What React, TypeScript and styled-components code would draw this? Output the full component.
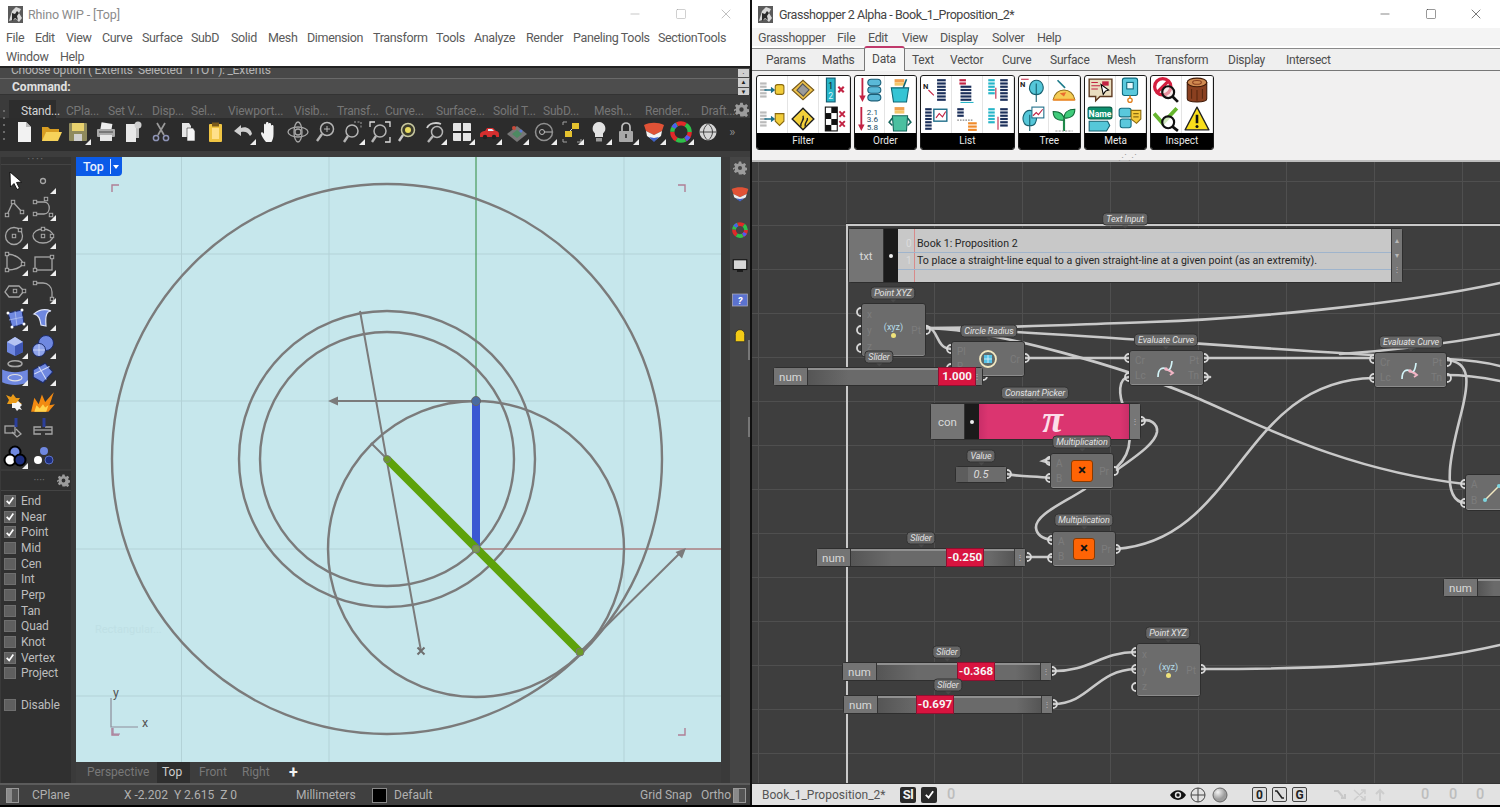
import React from "react";
import styled, { createGlobalStyle } from "styled-components";
import { Minus, Square, X } from "lucide-react";

const Global = createGlobalStyle`
  html, body { margin: 0; padding: 0; background: #000; }
  body { font-family: Roboto, "Open Sans", Arial, sans-serif; }
  * { box-sizing: border-box; }
`;

const OX = 752;
const OY = 162;

const Screen = styled.div`
  display: flex;
  width: 1500px;
  height: 807px;
  overflow: hidden;
  background: #000;
`;

/* ---------- shared window chrome ---------- */
const TitleBar = styled.div<{ $pad: number }>`
  display: flex;
  align-items: center;
  height: 28px;
  background: #fff;
  padding-left: ${(p) => p.$pad}px;
  flex: none;
`;
const TitleText = styled.span<{ $dim?: boolean }>`
  margin-left: ${(p) => (p.$dim ? 5 : 6)}px;
  font-size: 12.5px;
  letter-spacing: ${(p) => (p.$dim ? -0.15 : -0.45)}px;
  color: ${(p) => (p.$dim ? "#8b8b8b" : "#444")};
`;
const WinButtons = styled.div<{ $dim?: boolean }>`
  display: flex;
  margin-left: auto;
  margin-right: 1px;
  color: ${(p) => (p.$dim ? "#a0a0a0" : "#333")};
`;
const WinButton = styled.div`
  width: 45.5px;
  height: 28px;
  display: flex;
  align-items: center;
  justify-content: center;
`;
const MenuBar = styled.div<{ $bg?: string; $h: number }>`
  display: flex;
  flex-wrap: wrap;
  align-content: flex-start;
  flex: none;
  height: ${(p) => p.$h}px;
  padding-left: 6px;
  background: ${(p) => p.$bg || "#fff"};
`;
const MenuItem = styled.span<{ $w: number; $c: string }>`
  width: ${(p) => p.$w}px;
  height: 19px;
  line-height: 19px;
  font-size: 12.5px;
  letter-spacing: -0.35px;
  white-space: nowrap;
  color: ${(p) => p.$c};
`;

function Logo() {
  return (
    <svg width="15" height="17" viewBox="0 0 15 17">
      <rect width="15" height="17" fill="#5a5a5a" />
      <path d="M1 15 4 5l4-4 5 2-2 4 3 5-3 4-3-3-4 1z" fill="#d8d8d8" />
      <path d="M4 7l3 1 2-3 2 2-2 3 1 4-3-2-3 3z" fill="#2b2b2b" />
    </svg>
  );
}

function Buttons({ dim }: { dim?: boolean }) {
  return (
    <WinButtons $dim={dim}>
      <WinButton><Minus size={14} strokeWidth={1} /></WinButton>
      <WinButton><Square size={12} strokeWidth={1} /></WinButton>
      <WinButton><X size={16} strokeWidth={1} /></WinButton>
    </WinButtons>
  );
}

/* ---------- Rhino window ---------- */
const RhinoWindow = styled.div`
  width: 750px;
  height: 805px;
  display: flex;
  flex-direction: column;
  background: #3b3b3b;
  flex: none;
`;
const History = styled.div`
  height: 12px;
  flex: none;
  overflow: hidden;
  background: #484848;
  border-top: 2px solid #222;
  padding-left: 11px;
  font-size: 12px;
  line-height: 5px;
  white-space: pre;
  letter-spacing: -0.25px;
  color: #b5b5b5;
`;
const CommandRow = styled.div`
  height: 17px;
  flex: none;
  display: flex;
  align-items: center;
  background: #4d4d4d;
  border-top: 1px solid #6a6a6a;
  border-bottom: 1px solid #333;
  padding-left: 12px;
  font-size: 12px;
  font-weight: 700;
  color: #e0e0e0;
  position: relative;
`;
const ScrollKeys = styled.div`
  position: absolute;
  right: 1px;
  top: -10px;
  width: 11px;
  height: 27px;
  display: flex;
  flex-direction: column;
  gap: 1px;
`;
const ScrollKey = styled.span`
  flex: 1;
  background: #cfcfcf;
  color: #222;
  font-size: 6px;
  line-height: 8px;
  text-align: center;
`;
const TabStrip = styled.div`
  height: 23px;
  flex: none;
  display: flex;
  align-items: flex-end;
  padding-left: 9px;
  background: #3b3b3b;
  position: relative;
`;
const TbTab = styled.span<{ $w: number; $on?: boolean }>`
  width: ${(p) => p.$w}px;
  flex: none;
  height: 18px;
  line-height: 22px;
  font-size: 12px;
  letter-spacing: -0.2px;
  white-space: nowrap;
  color: ${(p) => (p.$on ? "#d4d4d4" : "#767676")};
  background: ${(p) => (p.$on ? "#2d2d2d" : "transparent")};
  padding-left: ${(p) => (p.$on ? 12 : 0)}px;
`;
const GearSpot = styled.span`
  position: absolute;
  right: 1px;
  top: 7px;
  display: flex;
`;
const IconRow = styled.div`
  height: 33px;
  flex: none;
  display: flex;
  align-items: flex-start;
  padding: 1px 0 0 10px;
  background: #2c2c2c;
  position: relative;
  &::before {
    content: "";
    position: absolute;
    left: 3px;
    top: -8px;
    width: 2px;
    height: 30px;
    background: repeating-linear-gradient(#6a6a6a 0 2px, transparent 2px 7px);
  }
`;
const ToolSlot = styled.div<{ $fly?: boolean; $w: number }>`
  width: ${(p) => p.$w}px;
  height: 26px;
  flex: none;
  display: flex;
  align-items: center;
  justify-content: center;
  position: relative;
  &::after {
    content: "";
    display: ${(p) => (p.$fly ? "block" : "none")};
    position: absolute;
    right: 1px;
    bottom: 0;
    border-left: 6px solid transparent;
    border-bottom: 6px solid #eee;
  }
`;
const MoreGlyph = styled.span`
  color: #8a8a8a;
  font-size: 13px;
  margin-left: 7px;
  line-height: 26px;
`;
const ToolbarGap = styled.div`
  height: 6px;
  flex: none;
  background: #3d3d3d;
`;
const RhinoBody = styled.div`
  flex: 1;
  display: flex;
  min-height: 0;
`;
const LeftDock = styled.div`
  width: 76px;
  flex: none;
  display: flex;
  flex-direction: column;
  background: #3a3a3a;
  padding: 0 5px 0 1px;
`;
const ToolPanel = styled.div`
  height: 312px;
  flex: none;
  background: #333;
  padding: 0;
`;
const Grip = styled.div`
  display: flex;
  justify-content: center;
  height: 8px;
  border-bottom: 1px solid #444;
  margin-bottom: 2px;
  &::before {
    content: "····";
    letter-spacing: 1.5px;
    color: #777;
    font-size: 11px;
    line-height: 5px;
  }
`;
const ToolGrid = styled.div`
  display: grid;
  grid-template-columns: 28px 28px;
  grid-auto-rows: 27.5px;
  justify-items: center;
  align-items: center;
`;
const SnapPanel = styled.div`
  flex: 1;
  background: #303030;
  margin-top: 2px;
`;
const SnapHead = styled.div`
  height: 20px;
  display: flex;
  align-items: center;
  justify-content: flex-end;
  padding-right: 1px;
  border-bottom: 1px solid #444;
  color: #777;
  font-size: 11px;
  gap: 12px;
  margin-bottom: 2px;
`;
const SnapRow = styled.div<{ $gap?: boolean }>`
  display: flex;
  align-items: center;
  height: 15.7px;
  padding-left: 3px;
  margin-top: ${(p) => (p.$gap ? 16 : 0)}px;
  font-size: 12px;
  letter-spacing: -0.1px;
  color: #bdbdbd;
`;
const Check = styled.span`
  width: 12px;
  height: 12px;
  margin-right: 5px;
  background: #5f5f5f;
  border: 1px solid #6f6f6f;
  display: flex;
  align-items: center;
  justify-content: center;
`;
const Center = styled.div`
  width: 645px;
  flex: none;
  display: flex;
  flex-direction: column;
`;
const Viewport = styled.div`
  height: 605px;
  flex: none;
  position: relative;
  background: #c6e7ec;
`;
const ViewSvg = styled.svg`
  display: block;
  width: 645px;
  height: 605px;
`;
const ViewTag = styled.div`
  position: absolute;
  left: 0;
  top: 0;
  width: 46px;
  height: 19px;
  display: flex;
  align-items: center;
  background: #0b5be8;
  color: #e6f0ff;
  font-size: 12.5px;
  font-weight: 500;
  border-bottom-right-radius: 4px;
  padding-left: 7px;
`;
const TagArrow = styled.span`
  margin-left: 6px;
  border-left: 1px solid #dfe9ff;
  height: 15px;
  padding-left: 2px;
  display: flex;
  align-items: center;
  &::after {
    content: "";
    border-left: 3px solid transparent;
    border-right: 3px solid transparent;
    border-top: 4px solid #fff;
  }
`;
const GhostLabel = styled.div`
  position: absolute;
  left: 19px;
  top: 466px;
  font-size: 11px;
  color: #bfe0e5;
`;
const ViewTabs = styled.div`
  flex: 1;
  display: flex;
  align-items: center;
  padding-left: 11px;
  background: #3d3d3d;
`;
const ViewTab = styled.span<{ $w: number; $on?: boolean; $plus?: boolean }>`
  width: ${(p) => p.$w}px;
  height: 21px;
  line-height: 21px;
  flex: none;
  padding-left: ${(p) => (p.$on ? 5 : 0)}px;
  color: ${(p) => (p.$plus ? "#f2f2f2" : p.$on ? "#cfcfcf" : "#787878")};
  font-weight: ${(p) => (p.$plus ? 700 : 400)};
  font-size: ${(p) => (p.$plus ? 16 : 12)}px;
  background: ${(p) => (p.$on ? "#2e2e2e" : "transparent")};
`;
const RightDock = styled.div`
  flex: 1;
  display: flex;
  flex-direction: column;
  align-items: flex-end;
  background: #3a3a3a;
  position: relative;
  &::before, &::after {
    content: "";
    position: absolute;
    right: 0;
    width: 2px;
    height: 20px;
    background: #777;
  }
  &::before { top: 183px; }
  &::after { top: 260px; }
`;
const DockBand = styled.div`
  width: 20px;
  display: flex;
  flex-direction: column;
  align-items: center;
  height: 100%;
  background: #454545;
`;
const DockSlot = styled.div<{ $h: number }>`
  height: ${(p) => p.$h}px;
  flex: none;
  display: flex;
  align-items: center;
  justify-content: center;
`;
const RhinoStatus = styled.div`
  height: 22px;
  flex: none;
  display: flex;
  align-items: center;
  position: relative;
  background: #404040;
  border-top: 2px solid #5c5c5c;
  font-size: 12px;
  color: #b0b0b0;
`;
const StatusCell = styled.span<{ $w: number; $inset?: number }>`
  width: ${(p) => p.$w}px;
  padding-left: ${(p) => p.$inset || 0}px;
  flex: none;
  white-space: nowrap;
  overflow: hidden;
  display: flex;
  align-items: center;
`;
const Swatch = styled.span`
  width: 15px;
  height: 15px;
  flex: none;
  background: #000;
  border: 1px solid #888;
  margin-right: 7px;
`;
const PaneMark = styled.span<{ $ml: number }>`
  width: 13px;
  height: 15px;
  flex: none;
  margin-left: ${(p) => p.$ml}px;
  background: linear-gradient(90deg, #8a8a8a 0 45%, #555 45%);
  border: 1px solid #999;
`;

/* ---------- Grasshopper window ---------- */
const GhWindow = styled.div`
  flex: 1;
  height: 805px;
  display: flex;
  flex-direction: column;
  border-left: 2px solid #111;
  background: #fff;
`;
const GhTabs = styled.div`
  height: 25px;
  flex: none;
  display: flex;
  align-items: flex-end;
  padding-left: 4px;
  background: #efefef;
  border-bottom: 1px solid #777;
  box-shadow: inset 0 2px 0 #fff, inset 0 3px 0 #8a8a8a;
`;
const GhTab = styled.span<{ $w: number; $on?: boolean }>`
  width: ${(p) => p.$w}px;
  flex: none;
  height: 25px;
  line-height: ${(p) => (p.$on ? 23 : 30)}px;
  font-size: 12px;
  letter-spacing: -0.25px;
  padding-left: ${(p) => (p.$on ? 7 : 10)}px;
  white-space: nowrap;
  color: #4d4d4d;
  margin-bottom: ${(p) => (p.$on ? -1 : 0)}px;
  margin-right: ${(p) => (p.$on ? -3 : 0)}px;
  position: relative;
  z-index: ${(p) => (p.$on ? 1 : 0)};
  background: ${(p) => (p.$on ? "#f6f6f6" : "transparent")};
  border: ${(p) => (p.$on ? "1px solid #777" : "none")};
  border-top: ${(p) => (p.$on ? "2px solid #c0396b" : "none")};
  border-bottom: none;
  border-radius: 3px 3px 0 0;
`;
const Ribbon = styled.div`
  height: 91px;
  flex: none;
  display: flex;
  gap: 3px;
  padding: 4px 0 0 4px;
  background: #f1f0f0;
  border-bottom: 2px solid #bdbdbd;
  position: relative;
`;
const RibbonGroup = styled.div<{ $cols: number }>`
  width: ${(p) => p.$cols * 31.4 + 0.5}px;
  height: 75px;
  display: flex;
  flex-direction: column;
  border: 1px solid #1a1a1a;
  border-radius: 3px;
  overflow: hidden;
  background: #fff;
`;
const RibbonCells = styled.div<{ $cols: number }>`
  flex: 1;
  display: grid;
  grid-template-columns: repeat(${(p) => p.$cols}, 1fr);
  grid-template-rows: 1fr 1fr;
`;
const RibbonCell = styled.div`
  display: flex;
  align-items: center;
  justify-content: center;
  border-right: 1px solid #e4e4e4;
  svg { display: block; }
`;
const RibbonLabel = styled.div`
  height: 16px;
  flex: none;
  background: #000;
  color: #e8e8e8;
  font-size: 10px;
  line-height: 15px;
  text-align: center;
`;
const RibbonGrip = styled.div`
  position: absolute;
  left: 366px;
  bottom: -1px;
  font-size: 9px;
  line-height: 6px;
  letter-spacing: 0.5px;
  color: #999;
`;
const Canvas = styled.div`
  flex: 1;
  position: relative;
  overflow: hidden;
  background-color: #3e3e3e;
  background-image:
    linear-gradient(90deg, #4f4f4f 1px, transparent 1px),
    linear-gradient(#4f4f4f 1px, transparent 1px);
  background-size: 88px 44px;
  background-position: 6px 19px;
`;
const GroupEdge = styled.div`
  position: absolute;
  left: ${846 - OX}px;
  top: ${224 - OY}px;
  width: 1000px;
  height: 800px;
  border-left: 2px solid #c9c9c9;
  border-top: 2px solid #c9c9c9;
  box-shadow: 0 -1px 0 #2f2f2f;
`;
const WireSvg = styled.svg`
  position: absolute;
  left: 0;
  top: 0;
  width: 748px;
  height: 621px;
`;
const Node = styled.div<{ $x: number; $y: number; $w: number; $h: number }>`
  position: absolute;
  left: ${(p) => p.$x - OX}px;
  top: ${(p) => p.$y - OY}px;
  width: ${(p) => p.$w}px;
  height: ${(p) => p.$h}px;
  background: #6c6c6c;
  border: 1px solid #2e2e2e;
  border-radius: 3px;
  display: flex;
  box-shadow: inset 0 -1px 0 #8c8c8c;
`;
const PortColumn = styled.div`
  flex: none;
  width: 17px;
  display: flex;
  flex-direction: column;
  justify-content: space-around;
  padding: 2px 0 2px 5px;
  font-size: 10px;
  color: #7c7c7c;
`;
const PortColumnRight = styled(PortColumn)`
  padding: 2px 4px 2px 0;
  text-align: right;
`;
const NodeFace = styled.div<{ $fixed?: number }>`
  flex: ${(p) => (p.$fixed ? "none" : 1)};
  width: ${(p) => (p.$fixed ? `${p.$fixed}px` : "auto")};
  display: flex;
  flex-direction: column;
  align-items: center;
  justify-content: center;
  color: #b5dde9;
  font-size: 9px;
  line-height: 10px;
`;
const YellowDot = styled.span`
  width: 5px;
  height: 5px;
  border-radius: 50%;
  background: #efe27a;
  margin-top: 1px;
`;
const MulBox = styled.div`
  width: 22px;
  height: 22px;
  border: 1px solid #8a3a00;
  border-radius: 3px;
  background: #ff6405;
  color: #111;
  font-size: 15px;
  font-weight: 700;
  line-height: 19px;
  text-align: center;
`;
const Tag = styled.div<{ $x: number; $y: number }>`
  position: absolute;
  left: ${(p) => p.$x - OX}px;
  top: ${(p) => p.$y - OY}px;
  transform: translate(-50%, -50%);
  height: 13px;
  padding: 0 3px;
  background: #666;
  border: 1px solid #333;
  border-radius: 4px;
  font-size: 9px;
  line-height: 11px;
  letter-spacing: -0.1px;
  font-style: italic;
  white-space: nowrap;
  color: #e2e2e2;
  z-index: 3;
  &::after {
    content: "";
    position: absolute;
    left: 50%;
    bottom: -4px;
    margin-left: -3px;
    border-left: 3px solid transparent;
    border-right: 3px solid transparent;
    border-top: 3px solid #4a4a4a;
  }
`;
const NameCell = styled.div<{ $w: number }>`
  width: ${(p) => p.$w}px;
  flex: none;
  display: flex;
  align-items: center;
  justify-content: center;
  font-size: 11.5px;
  color: #d8d8d8;
  background: #747474;
  border-right: 1px solid #333;
`;
const DotBand = styled.div`
  width: 14px;
  flex: none;
  background: #1b1b1b;
  display: flex;
  align-items: center;
  justify-content: center;
  &::after {
    content: "";
    width: 4px;
    height: 4px;
    border-radius: 50%;
    background: #eee;
  }
`;
const StripCell = styled.div`
  width: 11px;
  flex: none;
  background: #767676;
  border-left: 1px solid #3a3a3a;
  display: flex;
  flex-direction: column;
  align-items: center;
  justify-content: space-evenly;
  color: #b8b8b8;
  font-size: 8px;
  line-height: 6px;
`;
const SheetPanel = styled.div`
  flex: 1;
  position: relative;
  background: #c8c8c8;
  padding: 7px 0 0 19px;
  font-size: 10.6px;
  color: #262626;
  &::before {
    content: "";
    position: absolute;
    left: 16px;
    top: 0;
    bottom: 0;
    width: 1px;
    background: #d88a8a;
  }
`;
const SheetRow = styled.div`
  height: 17px;
  line-height: 16px;
  position: relative;
  margin-left: -19px;
  padding-left: 19px;
  border-bottom: 1px solid #9fb4cc;
`;
const RowNo = styled.span`
  position: absolute;
  left: 8px;
  color: #dcdcdc;
  font-size: 10px;
`;
const PiPanel = styled.div`
  flex: 1;
  background: linear-gradient(90deg, #c92e68, #db3570 6%, #db3570 94%, #c92e68);
  color: #fbdde9;
  font-family: "Liberation Serif", serif;
  font-style: italic;
  font-weight: 700;
  font-size: 38px;
  line-height: 30px;
  padding-right: 3px;
  text-align: center;
`;
const Track = styled.div`
  flex: 1;
  position: relative;
  background: linear-gradient(90deg, #555 0, #6a6a6a 25%, #6a6a6a 85%, #555 100%);
  box-shadow: inset 0 2px 0 #909090;
`;
const RedValue = styled.div<{ $left: number }>`
  position: absolute;
  left: ${(p) => p.$left}px;
  top: -1px;
  bottom: -1px;
  width: 38px;
  background: #d8143f;
  border: 1px solid #8e1030;
  color: #f6f6f6;
  font-size: 11.5px;
  font-weight: 700;
  text-align: center;
  line-height: 17px;
`;
const ValueFace = styled.div`
  flex: 1;
  text-align: center;
  font-style: italic;
  font-size: 11px;
  line-height: 15px;
  color: #dcdcdc;
  background: linear-gradient(90deg, #5d5d5d 0 12px, #6c6c6c 12px);
`;
const GhStatus = styled.div`
  height: 22px;
  flex: none;
  display: flex;
  align-items: center;
  padding-left: 10px;
  background: #e2e2e2;
  border-top: 1px solid #333;
  font-size: 12px;
  color: #555;
`;
const Spacer = styled.span<{ $w: number }>`
  width: ${(p) => p.$w}px;
  flex: none;
  display: flex;
  align-items: center;
  white-space: nowrap;
`;
const DarkChip = styled.span`
  width: 16px;
  height: 16px;
  flex: none;
  border-radius: 2px;
  background: #2a2a2a;
  color: #f2f2f2;
  display: flex;
  align-items: center;
  justify-content: center;
  font-size: 13px;
  font-weight: 700;
  letter-spacing: -0.5px;
`;
const PaleCount = styled.span<{ $w: number }>`
  width: ${(p) => p.$w}px;
  flex: none;
  font-size: 14.5px;
  color: #bdbdbd;
  font-weight: 500;
`;
const OutlineChip = styled.span`
  width: 15px;
  height: 15px;
  flex: none;
  border: 1px solid #444;
  border-radius: 2px;
  background: #dcdcdc;
  color: #222;
  font-size: 12px;
  font-weight: 700;
  display: flex;
  align-items: center;
  justify-content: center;
  margin-right: 5px;
`;

/* ---------- icons ---------- */
const T = (children: React.ReactNode, size = 24) => (
  <svg width={size} height={size} viewBox="0 0 24 24">{children}</svg>
);
const sq = (x: number, y: number) => <rect x={x - 1.7} y={y - 1.7} width="3.4" height="3.4" fill="#333" stroke="#a8a8a8" />;
const line = { fill: "none", stroke: "#a6a6a6", strokeWidth: 1.3 };

const topTools: [React.ReactNode, boolean][] = [
  [T(<><path d="M6 2h8l5 5v15H6z" fill="#f2f2f2" /><path d="M14 2v5h5" fill="#bbb" /></>), false],
  [T(<><path d="M3 7h6l2 2h9v4H7l-3 8H3z" fill="#d89d22" /><path d="M7 12h16l-4 9H3z" fill="#f6d25a" /></>), false],
  [T(<><rect x="3" y="3" width="18" height="18" rx="1" fill="#8f8a5d" /><rect x="6" y="3" width="12" height="8" fill="#e9d26e" /><rect x="8" y="14" width="8" height="7" fill="#d0d0d0" /></>), true],
  [T(<><rect x="7" y="3" width="11" height="7" fill="#eee" transform="rotate(10 12 6)" /><rect x="3" y="9" width="18" height="8" rx="1" fill="#a9a9a9" /><rect x="6" y="15" width="12" height="6" fill="#e6e6e6" /><path d="M5 12h14" stroke="#444" /></>), false],
  [T(<><path d="M5 4h10v18H5z" fill="#e8e8e8" /><path d="M15 6h3v12h-3z" fill="#bdbdbd" /><circle cx="17" cy="5" r="3.5" fill="#cfcfcf" /></>), false],
  [T(<><path d="M8 3l7 12M16 3L9 15" stroke="#9a9a9a" strokeWidth="1.7" /><circle cx="7" cy="18" r="2.6" fill="none" stroke="#8f95b8" strokeWidth="1.5" /><circle cx="17" cy="18" r="2.6" fill="none" stroke="#8f95b8" strokeWidth="1.5" /></>), false],
  [T(<><path d="M6 3h7l2 3v11H6z" fill="#e6e6e6" /><path d="M11 8h6l2 3v10h-8z" fill="#f5f5f5" stroke="#333" strokeWidth=".6" /></>), false],
  [T(<><rect x="6" y="4" width="13" height="18" rx="1" fill="#f0c543" /><rect x="9" y="2.5" width="7" height="4" fill="#7a5a1c" /><rect x="9" y="8" width="7" height="11" fill="#ffe08a" /></>), false],
  [T(<path d="M3 14c1-6 7-8 11-6V5l7 6-7 5v-4c-4-1-7 0-9 4z" transform="matrix(-1 0 0 1 24 0)" fill="#cfcfcf" />), true],
  [T(<path d="M8 22c-2-2-5-7-5-9 0-1 2-1 3 1V5c0-1.700 2-1.700 2 0V3c0-1.500 2.500-1.500 2.500 0v1c0-1.500 2.500-1.500 2.500 0v2c0-1.500 2.500-1.500 2.500 0v8c0 4-1 6-2 8z" fill="#f2f2f2" />), false],
  [T(<><circle cx="12" cy="12" r="3" fill="none" {...line} /><ellipse cx="12" cy="12" rx="10" ry="5" {...line} /><ellipse cx="12" cy="12" rx="4" ry="10" {...line} /></>), false],
  [T(<><circle cx="14" cy="9" r="6.5" fill="#2c2c2c" stroke="#b5b5b5" strokeWidth="1.5" /><path d="M9 14l-5 7" stroke="#b5b5b5" strokeWidth="2.400" /><path d="M14 6v6M11 9h6" stroke="#b5b5b5" /></>), false],
  [T(<><circle cx="12" cy="11" r="6" fill="none" stroke="#b5b5b5" strokeWidth="1.500" /><path d="M8 16l-4 6" stroke="#b5b5b5" strokeWidth="2.400" /><path d="M14 2h7v7" fill="none" stroke="#a0a0a0" strokeDasharray="2 1.500" /></>), true],
  [T(<><circle cx="12" cy="11" r="6" fill="none" stroke="#b5b5b5" strokeWidth="1.500" /><path d="M8 16l-4 6" stroke="#b5b5b5" strokeWidth="2.400" /><path d="M2 7V2h5M17 2h5v5M22 17v5h-5" fill="none" stroke="#ddd" strokeWidth="1.300" /></>), false],
  [T(<><circle cx="13" cy="10" r="6.500" fill="#3c3c2c" stroke="#c8c8a0" strokeWidth="1.500" /><circle cx="13" cy="10" r="3" fill="#e9dc5f" /><path d="M8 15l-4 6" stroke="#c8c8c8" strokeWidth="2.400" /></>), false],
  [T(<><circle cx="14" cy="12" r="5.500" fill="none" stroke="#b5b5b5" strokeWidth="1.500" /><path d="M10 16l-5 6" stroke="#b5b5b5" strokeWidth="2.400" /><path d="M4 8c2-5 9-6 14-4" fill="none" stroke="#ccc" strokeWidth="1.800" /></>), true],
  [T(<><rect x="3" y="3" width="18" height="18" rx="1" fill="#e4e4e4" /><path d="M12 3v18M3 12h18" stroke="#222" strokeWidth="1.800" /></>), true],
  [T(<><path d="M3 15c0-3 3-4 5-4l2-3h6l3 3c2 0 3 1 3 4v2H3z" fill="#d62f2f" /><circle cx="8" cy="17" r="2.200" fill="#222" /><circle cx="17" cy="17" r="2.200" fill="#222" /><path d="M11 9h4l2 2h-6z" fill="#d9e9f5" /></>), true],
  [T(<><path d="M2 14l10-8 10 8-10 8z" fill="#777" /><path d="M7 14l5-4 5 4-5 4z" fill="#4d8a62" /><circle cx="9" cy="8" r="2" fill="#c94a3a" /><circle cx="16" cy="11" r="1.500" fill="#5b7ad6" /></>), true],
  [T(<><circle cx="12" cy="12" r="8.500" fill="none" stroke="#909090" strokeWidth="1.500" /><circle cx="10" cy="12" r="2.500" fill="none" stroke="#bbb" /><path d="M12 12h8" stroke="#bbb" /></>), true],
  [T(<><rect x="12" y="3" width="7" height="6" fill="#e5c22e" /><rect x="5" y="11" width="7" height="6" fill="#e5c22e" /><path d="M3 5V2h4M21 19v3h-4M3 19v3h4" fill="none" stroke="#a0a0a0" /><path d="M12 9l-2 2" stroke="#ddd" /></>), true],
  [T(<><path d="M12 2a6.500 6.500 0 0 1 4 11.500V17H8v-3.500A6.500 6.500 0 0 1 12 2z" fill="#e2e2e2" /><rect x="9" y="18" width="6" height="3.500" fill="#9a9a9a" /></>), true],
  [T(<><path d="M8 11V7a4 4 0 0 1 8 0v4" fill="none" stroke="#bdbdbd" strokeWidth="1.700" /><rect x="5" y="11" width="14" height="11" rx="1" fill="#a8a8a8" /><rect x="11" y="14" width="2" height="4" fill="#444" /></>), true],
  [T(<><path d="M2 5c6-3 14-3 20 0l-2 6-8 4-8-4z" fill="#e05236" /><path d="M4 11l8 4 8-4-1 5-7 5-7-5z" fill="#f4f4f4" /><path d="M7 17l5 5 5-5-5 1z" fill="#3f62c9" /></>), true],
  [<svg width="26" height="26" viewBox="0 0 24 24"><circle cx="12" cy="12" r="8" fill="none" stroke="#e02a2a" strokeWidth="4" strokeDasharray="8.400 8.400" /><circle cx="12" cy="12" r="8" fill="none" stroke="#2fbf4a" strokeWidth="4" strokeDasharray="8.400 8.400" strokeDashoffset="8.400" /><circle cx="12" cy="12" r="8" fill="none" stroke="#4d5cf0" strokeWidth="4" strokeDasharray="4 21" strokeDashoffset="-4" /></svg>, true],
  [T(<><circle cx="12" cy="12" r="8.500" fill="#d6d6d6" /><path d="M3.500 12h17M12 3.500c-6 5-6 12 0 17M12 3.500c6 5 6 12 0 17" fill="none" stroke="#333" strokeWidth=".9" /></>), false],
];

const blue = "#6f88e0";
const sideTools: [React.ReactNode, boolean][] = [
  [T(<path d="M7 3l.5 15 3.500-3.500 3 6 2.500-1.200-3-5.800 5-.5z" fill="#fff" stroke="#000" strokeWidth=".8" />), false],
  [T(<circle cx="12" cy="12" r="2.500" {...line} />), true],
  [T(<><path d="M4 19l6-13 9 10" {...line} />{sq(4, 19)}{sq(10, 6)}{sq(19, 16)}</>), true],
  [T(<><path d="M4 6h9c7 0 7 12 0 12H4" {...line} />{sq(4, 6)}{sq(4, 18)}{sq(15, 3)}{sq(20, 19)}</>), true],
  [T(<><circle cx="11" cy="12" r="8.500" {...line} />{sq(11, 12)}{sq(17, 6)}</>), true],
  [T(<><ellipse cx="12" cy="12" rx="10" ry="7" {...line} />{sq(12, 12)}{sq(12, 5)}{sq(21, 12)}</>), true],
  [T(<><path d="M4 3c8 0 15 5 16 10-3 4-9 6-16 6z" {...line} />{sq(4, 3)}{sq(4, 19)}{sq(20, 13)}</>), true],
  [T(<><rect x="4" y="6" width="17" height="13" {...line} />{sq(4, 19)}{sq(21, 6)}</>), true],
  [T(<><path d="M6 7h10l5 5-5 6H6l-4-5z" {...line} />{sq(12, 12)}{sq(21, 12)}</>), true],
  [T(<><path d="M4 4h8c5 0 9 4 9 9v7" {...line} />{sq(4, 4)}{sq(21, 20)}</>), true],
  [T(<><path d="M5 7l14-3 2 14-12 3z" fill={blue} stroke="#1d2c6a" /><path d="M12 5l2 15M6 14l14-3" stroke="#c4d0f5" strokeWidth=".6" /><circle cx="5" cy="7" r="1.500" fill="#fff" /><circle cx="19" cy="4" r="1.500" fill="#fff" /><circle cx="21" cy="18" r="1.500" fill="#fff" /><circle cx="9" cy="21" r="1.500" fill="#fff" /></>), true],
  [T(<path d="M3 8c6-5 12-5 17-3-4 0-6 4-5 15l-5-1c-1-6-2-10-7-11z" fill={blue} stroke="#dfe5fa" strokeWidth="1.200" />), true],
  [T(<><path d="M4 8l8-5 8 5v10l-8 4-8-4z" fill={blue} /><path d="M4 8l8 4 8-4-8-5z" fill="#b6c4f3" /><path d="M12 12v10l8-4V8z" fill="#3f57b5" /></>), true],
  [T(<><circle cx="15" cy="9" r="7.500" fill={blue} stroke="#1d2c6a" /><circle cx="8" cy="16" r="6.500" fill="#8ea3ea" stroke="#1d2c6a" /><path d="M2 16h12M8 10v12" stroke="#e8edfb" strokeWidth=".6" /></>), true],
  [T(<><ellipse cx="12" cy="4" rx="6" ry="2.500" {...line} /><path d="M1 9c7 3 15 3 22 0v11c-7 3-15 3-22 0z" fill={blue} /><ellipse cx="12" cy="16" rx="6" ry="2.700" fill={blue} stroke="#e0e0e0" /></>, 28), true],
  [T(<><path d="M3 9l11-6 7 8-9 10-9-5z" fill={blue} stroke="#1d2c6a" /><path d="M8 6l7 12M4 13l14-7" stroke="#cfd9f8" /></>, 26), true],
  [T(<><path d="M3 6l5 2 2-3 3 4 4 0-2 3 4 3-6 0-2 4-2-4-5 0 2-4z" fill="#e99a18" /><path d="M9 14h4l2-2 2 2 2 2-2 2 2 3-3-1-2 2-2-3-3 0z" fill="#f4f4f4" /></>), false],
  [T(<><path d="M1 22l3-13 4 6 3-9 3 7 8-9-4 12 5-1-6 7z" fill="#f28a12" /><path d="M4 22l2-6 3 3 3-4 2 3 3-2-2 6z" fill="#ffd34d" /></>, 26), false],
  [T(<><rect x="2" y="10" width="10" height="7" {...line} /><path d="M13 13l5 5-4 3-5-5" {...line} /><path d="M13 2v9" stroke="#2b3f9b" strokeWidth="3" /></>), false],
  [T(<><path d="M10 11H3v7h7M14 11h7v7h-7" {...line} /><path d="M3 14h18" {...line} /><path d="M13 2v9" stroke="#2b3f9b" strokeWidth="3" /></>), false],
  [T(<><circle cx="12" cy="8" r="5.500" fill={blue} stroke="#000" strokeWidth="2" /><circle cx="7" cy="16" r="5.500" fill="#fff" stroke="#000" strokeWidth="2" /><circle cx="17" cy="16" r="5.500" fill="#1e2f80" stroke="#000" strokeWidth="2" /></>), true],
  [T(<><circle cx="13" cy="7" r="4" fill={blue} /><circle cx="7" cy="16" r="4" fill="#fff" /><circle cx="18" cy="16" r="4" fill="#1e2f80" stroke="#5b70c7" /></>), false],
];

const Gear = ({ size = 15, color = "#9c9c9c" }: { size?: number; color?: string }) => (
  <svg width={size} height={size} viewBox="0 0 24 24">
    <path fill={color} fillRule="evenodd" d="M10 1h4l.7 3.300 2 .9L19.600 3.300l2.800 2.800-1.900 2.900.9 2 3.300.7v4l-3.300.7-.9 2 1.900 2.900-2.800 2.800-2.900-1.900-2 .9L14 23h-4l-.7-3.300-2-.9-2.900 1.900-2.800-2.800 1.900-2.900-.9-2L-.7 16v-4l3.300-.7.9-2L1.600 6.100l2.800-2.800 2.900 1.900 2-.9zM12 8.500a3.500 3.500 0 1 0 0 7 3.500 3.500 0 0 0 0-7z" />
  </svg>
);

const bars = (c: string, xs: number[], y0 = 3, w = 7) => (
  <>{xs.map((x, i) => <rect key={i} x={x} y={y0 + i * 3} width={w} height="2" fill={c} />)}</>
);
const R = (children: React.ReactNode) => <svg width="26" height="26" viewBox="0 0 24 24">{children}</svg>;
const ink = "#1b2f5a";
const teal = "#27b5c8";

const ribbonGroups: { name: string; cols: number; icons: React.ReactNode[] }[] = [
  {
    name: "Filter", cols: 3, icons: [
      R(<>{bars("#bbb", [1, 1, 1, 1, 1], 5, 6)}<path d="M5 12h8" stroke="#1b6f8a" strokeWidth="1.500" /><path d="M11 9l4 3-4 3z" fill="#1b6f8a" /><rect x="15" y="7" width="8" height="9" rx="2" fill="#f2cd3a" stroke="#8a6a10" /></>),
      R(<><path d="M2 12l10-9 10 9-10 9z" fill="#eec24a" stroke="#76591a" /><rect x="8" y="8" width="8" height="8" fill="#9a9a9a" stroke="#555" transform="rotate(42 12 12)" /></>),
      R(<><rect x="5" y="1" width="8" height="22" fill={teal} stroke="#135b70" /><text x="9" y="11" fontSize="8" fill="#111" textAnchor="middle" fontFamily="Roboto">1</text><text x="9" y="20" fontSize="8" fill="#d9f3f7" textAnchor="middle" fontFamily="Roboto">2</text><path d="M16 9l5 5M21 9l-5 5" stroke="#c22343" strokeWidth="2" /></>),
      R(<>{bars("#bbb", [1, 1, 1, 1, 1], 5, 6)}<path d="M5 12h8" stroke="#1b6f8a" strokeWidth="1.500" /><path d="M11 9l4 3-4 3z" fill="#1b6f8a" /><path d="M15 7h8v7l-4 4-4-4z" fill="#f2cd3a" stroke="#8a6a10" /></>),
      R(<><path d="M2 12l10-10 10 10-10 10z" fill="#f2cf3a" stroke="#222" strokeWidth="1.300" /><path d="M10 19c-1-5 4-5 2-10M14 19c-1-4 3-5 2-8" fill="none" stroke="#222" strokeWidth="1.300" /></>),
      R(<><rect x="4" y="1" width="11" height="22" fill="#fff" stroke="#111" />{[0, 1, 2, 3].map((r) => <rect key={r} x={r % 2 ? 4 : 9.500} y={1 + r * 5.500} width="5.500" height="5.500" fill="#111" />)}<path d="M17 5l5 5M22 5l-5 5M17 14l5 5M22 14l-5 5" stroke="#c22343" strokeWidth="1.800" /></>),
    ],
  },
  {
    name: "Order", cols: 2, icons: [
      R(<><path d="M5 1v19" stroke="#c22343" strokeWidth="1.700" /><path d="M2 17l3 6 3-6z" fill="#c22343" /><rect x="10" y="2" width="12" height="6" rx="3" fill="#5ab9d8" stroke="#195e78" /><rect x="10" y="9" width="12" height="6" rx="3" fill="#5ab9d8" stroke="#195e78" /><rect x="10" y="16" width="12" height="6" rx="3" fill="#5ab9d8" stroke="#195e78" /></>),
      R(<><path d="M4 10h16l-2 13H6z" fill="#35c4d4" stroke="#0e6676" /><rect x="7" y="2" width="9" height="3" fill="#f0a050" /><rect x="7" y="5" width="9" height="3" fill="#f4c66b" /><path d="M18 2l-3 8" stroke="#0e6676" strokeWidth="1.500" /></>),
      R(<><path d="M4 1v19" stroke="#c22343" strokeWidth="1.700" /><path d="M1 17l3 6 3-6z" fill="#c22343" /><text x="9" y="8" fontSize="7.500" fill="#1b4c66" fontFamily="Roboto">2.1</text><text x="9" y="15" fontSize="7.500" fill="#1b4c66" fontFamily="Roboto">3.6</text><text x="9" y="22" fontSize="7.500" fill="#1b4c66" fontFamily="Roboto">5.8</text></>),
      R(<><path d="M5 9h14l-1 14H6z" fill="#4bc0a0" stroke="#14665c" /><path d="M5 11l-3 4 3 3M19 11l3 4-3 3" fill="none" stroke="#14665c" strokeWidth="1.500" /><rect x="7" y="1" width="9" height="3" fill="#f0a050" /><rect x="7" y="4" width="9" height="3" fill="#f4c66b" /></>),
    ],
  },
  {
    name: "List", cols: 3, icons: [
      R(<><text x="0" y="11" fontSize="7" fill="#222" fontFamily="Roboto" fontWeight="700">N</text><path d="M5 12l5 5" stroke="#c22343" /><g>{bars(ink, [13, 13, 13, 13, 13, 13, 13], 2, 8)}</g></>),
      R(<>{bars("#c22343", [5, 5], 2, 6)}{bars(ink, [6, 6, 6, 6, 6], 8, 10)}{bars(teal, [6], 23, 12)}</>),
      R(<>{bars(teal, [3, 3, 3, 3, 3], 2, 6)}{bars(ink, [14, 14, 14, 14, 14, 14, 14], 2, 7)}<path d="M10 10v10" stroke="#c22343" /></>),
      R(<>{bars(ink, [2, 2, 2, 2, 2, 2, 2], 2, 6)}<rect x="10" y="3" width="12" height="11" fill="#fff" stroke="#1f6e8a" strokeWidth="1.300" /><path d="M12 11l3-4 3 3 3-5" fill="none" stroke="#c22343" /></>),
      R(<>{bars(ink, [3, 3, 3], 2, 6)}<path d="M3 13h14" stroke="#888" strokeDasharray="1.500 1" />{bars("#f08a2a", [13, 13, 13], 15, 8)}</>),
      R(<>{bars(teal, [3, 3, 3, 3, 3], 2, 6)}{bars(ink, [14, 14, 14, 14, 14, 14], 2, 7)}<path d="M12 22V10" stroke="#c22343" /></>),
    ],
  },
  {
    name: "Tree", cols: 2, icons: [
      R(<><text x="0" y="9" fontSize="7" fill="#222" fontWeight="700" fontFamily="Roboto">N</text><path d="M1 2h7" stroke="#c22343" /><path d="M15 3c6 0 8 7 5 11-2 3-8 3-10 0-3-4 0-11 5-11z" fill="#55c7d9" stroke="#17606f" /><path d="M15 6v17" stroke="#17606f" /></>),
      R(<><path d="M2 21c2-12 18-12 20 0z" fill="#f4cc55" stroke="#8c6b18" /><path d="M6 3l7 7" stroke="#1b7a8a" strokeWidth="1.500" /><path d="M14 14l-6 1 4 3z" fill="#e96b2f" /><path d="M2 21h20" stroke="#f08a2a" strokeWidth="2" /></>),
      R(<><path d="M9 4c5 0 8 6 5 12-2 3-8 3-10 0-3-5 0-12 5-12z" fill="#55c7d9" stroke="#17606f" /><path d="M9 8v15" stroke="#17606f" /><rect x="11" y="1" width="11" height="10" fill="#fff" stroke="#1f6e8a" /><path d="M12 9l3-3 2 2 4-5" fill="none" stroke="#c22343" /></>),
      R(<><path d="M12 23V12" stroke="#1f8a4a" strokeWidth="2" /><path d="M12 13C6 14 2 11 2 5c6 0 10 2 10 8zM12 11c0-5 4-8 10-8 0 6-4 9-10 8z" fill="#3fcb7a" stroke="#136b3b" /><path d="M4 23h16" stroke="#999" strokeDasharray="2 1" /></>),
    ],
  },
  {
    name: "Meta", cols: 2, icons: [
      R(<><path d="M2 2h21v16H12l-4 4v-4H2z" fill="#e9ddbf" stroke="#5e3a20" strokeWidth="1.300" /><path d="M4 5h6M4 8h8M4 11h6" stroke="#c22343" /><rect x="14" y="4" width="6" height="4" fill="#c22343" /><path d="M13 7l2 9 2-3 3-1z" fill="#fff" stroke="#000" /></>),
      R(<><rect x="5" y="1" width="14" height="16" rx="2" fill="#5ac8dc" stroke="#0f6a7e" /><rect x="9" y="5" width="6" height="6" fill="#e6f8fb" stroke="#0f6a7e" /><path d="M12 17v3" stroke="#e08020" strokeWidth="1.500" /><circle cx="12" cy="21.500" r="2" fill="none" stroke="#e08020" strokeWidth="1.300" /></>),
      R(<><rect x="1" y="1" width="22" height="11" rx="2" fill="#0d8f6e" stroke="#0a5a45" /><text x="12" y="10" fontSize="8" fill="#fff" textAnchor="middle" fontFamily="Roboto" fontWeight="700">Name</text><path d="M2 14h17l2 4-3 5H2z" fill="#55c7d9" stroke="#17606f" /></>),
      R(<><rect x="2" y="2" width="11" height="8" rx="2" fill="#5ac8dc" stroke="#0f6a7e" /><rect x="3" y="12" width="10" height="8" rx="2" fill="#5ac8dc" stroke="#0f6a7e" /><path d="M13 4h9v8l-4 4-5-4z" fill="#f5c93a" stroke="#8a6a10" /><path d="M15 7h5M15 10h5" stroke="#8a6a10" /></>),
    ],
  },
  {
    name: "Inspect", cols: 2, icons: [
      R(<><circle cx="9" cy="9" r="7.500" fill="#fff" stroke="#d41f3f" strokeWidth="3" /><path d="M4 14L14 4" stroke="#d41f3f" strokeWidth="3" /><circle cx="14" cy="14" r="5.500" fill="#f2dcdc" fillOpacity=".6" stroke="#111" strokeWidth="2" /><path d="M18 18l5 5" stroke="#111" strokeWidth="2.500" /></>),
      R(<><path d="M3 5v15c0 4 18 4 18 0V5z" fill="#8a4020" stroke="#401a08" /><ellipse cx="12" cy="5" rx="9" ry="4" fill="#d08a50" stroke="#401a08" /><ellipse cx="12" cy="5" rx="4" ry="1.700" fill="none" stroke="#8a4020" /><path d="M7 11v9M12 12v10M17 11v9" stroke="#5a2810" /></>),
      R(<><path d="M1 7l8 9L22 2" fill="none" stroke="#66b62e" strokeWidth="3.500" /><circle cx="14" cy="15" r="5.500" fill="#fff" fillOpacity=".7" stroke="#111" strokeWidth="2" /><path d="M18 19l5 4" stroke="#111" strokeWidth="2.500" /></>),
      R(<><path d="M12 1l11 21H1z" fill="#f9de1b" stroke="#222" strokeWidth="1.200" strokeLinejoin="round" /><path d="M12 8v8" stroke="#111" strokeWidth="2.400" /><circle cx="12" cy="19" r="1.400" fill="#111" /></>),
    ],
  },
];

/* ---------- wires ---------- */
const wires: string[] = [
  "M926 328C1010 328 1060 325 1150 322S1400 305 1500 283",
  "M926 328C1010 329 1200 345 1374 355",
  "M926 328C1000 330 1130 370 1190 395S1340 470 1465 484",
  "M926 326C940 330 935 348 951 349",
  "M1025 358H1129",
  "M1204 358H1374",
  "M1204 377H1210",
  "M1340 354C1400 350 1450 343 1500 334",
  "M1447 359C1470 360 1485 362 1500 366",
  "M1447 375C1470 375 1485 378 1500 381",
  "M1447 360C1472 362 1468 385 1462 410S1436 500 1465 503",
  "M1007 474C1020 477 1035 476 1050 478",
  "M1027 557H1052",
  "M1116 549C1240 540 1240 380 1374 378",
  "M1141 421C1150 418 1158 424 1157 432C1155 445 1130 460 1117 470",
  "M1117 467C1135 450 1130 430 1125 410C1118 395 1118 378 1129 377",
  "M1050 458L1043 461 1050 463",
  "M1085 489C1060 505 1035 515 1036 528C1037 536 1045 539 1052 540",
  "M983 376H975",
  "M1052 671C1090 672 1100 652 1136 652",
  "M1053 704C1090 704 1095 670 1136 669",
  "M1201 669C1300 669 1400 668 1500 645",
];
const inPorts: [number, number][] = [
  [861, 312], [861, 330], [861, 348], [951, 349], [951, 368], [1129, 358], [1129, 377], [1374, 359], [1374, 378],
  [1465, 484], [1465, 503], [1050, 461], [1050, 478], [1052, 540], [1052, 558], [1136, 652], [1136, 669], [1136, 687],
];
const outPorts: [number, number][] = [
  [926, 330], [1025, 358], [983, 376], [1204, 358], [1204, 377], [1447, 362], [1447, 378], [1141, 421], [1114, 471],
  [1007, 474], [1116, 549], [1027, 557], [1052, 671], [1053, 704], [1201, 669],
];

function Slider({ x, y, left, value }: { x: number; y: number; left: number; value: string }) {
  return (
    <Node $x={x} $y={y} $w={210} $h={19}>
      <NameCell $w={34}>num</NameCell>
      <Track><RedValue $left={left}>{value}</RedValue></Track>
      <StripCell>⋮</StripCell>
    </Node>
  );
}

const rhinoMenu: [string, number][] = [["File", 29], ["Edit", 31], ["View", 36], ["Curve", 40], ["Surface", 49], ["SubD", 40], ["Solid", 37], ["Mesh", 39], ["Dimension", 66], ["Transform", 63], ["Tools", 38], ["Analyze", 52], ["Render", 47], ["Paneling Tools", 85], ["SectionTools", 80], ["Window", 54], ["Help", 40]];
const rhinoTabs: [string, number][] = [["CPla...", 42], ["Set V...", 44], ["Disp...", 39], ["Sel...", 37], ["Viewport...", 66], ["Visib...", 43], ["Transf...", 48], ["Curve...", 51], ["Surface...", 57], ["Solid T...", 50], ["SubD...", 51], ["Mesh...", 51], ["Render...", 56], ["Draft...", 36]];
const snaps: [string, boolean][] = [["End", true], ["Near", true], ["Point", true], ["Mid", false], ["Cen", false], ["Int", false], ["Perp", false], ["Tan", false], ["Quad", false], ["Knot", false], ["Vertex", true], ["Project", false]];
const ghMenu: [string, number][] = [["Grasshopper", 79], ["File", 31], ["Edit", 34], ["View", 38], ["Display", 52], ["Solver", 45], ["Help", 40]];
const ghTabs: [string, number, boolean?][] = [["Params", 56], ["Maths", 52], ["Data", 41, true], ["Text", 38], ["Vector", 52], ["Curve", 48], ["Surface", 57], ["Mesh", 48], ["Transform", 73], ["Display", 58], ["Intersect", 70]];

const Tick = () => (
  <svg width="11" height="11" viewBox="0 0 12 12"><path d="M2 6.500l3 3 5-7" fill="none" stroke="#fff" strokeWidth="2" /></svg>
);

const circleStyle = { fill: "none", stroke: "#7b7b7b", strokeWidth: 2.4 };

export default function App() {
  return (
    <Screen>
      <Global />
      <RhinoWindow>
        <TitleBar $pad={8}>
          <Logo />
          <TitleText $dim>Rhino WIP - [Top]</TitleText>
          <Buttons dim />
        </TitleBar>
        <MenuBar $h={38}>
          {rhinoMenu.map(([t, w]) => <MenuItem key={t} $w={w} $c="#5a5a5a">{t}</MenuItem>)}
        </MenuBar>
        <History>Choose option ( Extents  Selected  1TO1 ): _Extents</History>
        <CommandRow>
          Command:
          <ScrollKeys>
            <ScrollKey>·</ScrollKey>
            <ScrollKey>▲</ScrollKey>
            <ScrollKey>▼</ScrollKey>
          </ScrollKeys>
        </CommandRow>
        <TabStrip>
          <TbTab $w={47} $on>Stand...</TbTab>
          <Spacer $w={10} />
          {rhinoTabs.map(([t, w]) => <TbTab key={t} $w={w}>{t}</TbTab>)}
          <GearSpot><Gear /></GearSpot>
        </TabStrip>
        <IconRow>
          {topTools.map(([ic, fly], i) => <ToolSlot key={i} $w={27.4} $fly={fly}>{ic}</ToolSlot>)}
          <MoreGlyph>»</MoreGlyph>
        </IconRow>
        <ToolbarGap />
        <RhinoBody>
          <LeftDock>
            <ToolPanel>
              <Grip />
              <ToolGrid>
                {sideTools.map(([ic, fly], i) => <ToolSlot key={i} $w={28} $fly={fly}>{ic}</ToolSlot>)}
              </ToolGrid>
            </ToolPanel>
            <SnapPanel>
              <SnapHead>···· <Gear size={13} /></SnapHead>
              {snaps.map(([t, on]) => (
                <SnapRow key={t}><Check>{on && <Tick />}</Check>{t}</SnapRow>
              ))}
              <SnapRow $gap><Check />Disable</SnapRow>
            </SnapPanel>
          </LeftDock>
          <Center>
            <Viewport>
              <ViewSvg viewBox="76 157 645 605">
                <g stroke="#b3d2d7" strokeWidth="1">
                  <path d="M181.500 157V762M329 157V762M624 157V762M76 254H721M76 401H721M76 696H721M76 549H476" />
                </g>
                <path d="M476 157V549" stroke="#2f8a3c" strokeWidth="1" />
                <path d="M476 549H721" stroke="#9c4a4a" strokeWidth="1" />
                <circle cx="387" cy="459" r="275" {...circleStyle} />
                <circle cx="387" cy="459" r="148" {...circleStyle} />
                <circle cx="387" cy="459" r="127" {...circleStyle} />
                <circle cx="476" cy="549" r="148" {...circleStyle} />
                <path d="M476 401H336M360 311L421 651M387 459L371 443M580 652L680 553" fill="none" stroke="#7b7b7b" strokeWidth="2" />
                <path d="M328 401l10-4.500v9zM686 548l-4 10.500-6.500-6.500z" fill="#7b7b7b" />
                <path d="M417.500 647.500l7 7M424.500 647.500l-7 7" stroke="#6e6e6e" strokeWidth="2" />
                <path d="M476 401V549" stroke="#3a58d2" strokeWidth="8" />
                <path d="M387 459L580 652" stroke="#5da20b" strokeWidth="8" />
                <circle cx="476" cy="401" r="4.500" fill="#4a6ba0" stroke="#666" />
                <circle cx="476" cy="549" r="4" fill="#7a9a50" stroke="#777" />
                <circle cx="387" cy="459" r="3.500" fill="#6c9a28" stroke="#777" />
                <circle cx="580" cy="652" r="4" fill="#6c9a28" stroke="#777" />
                <path d="M112 192v-7h7M685 192v-7h-7M112 728v7h7M685 728v7h-7" fill="none" stroke="#b07f95" strokeWidth="1.400" />
                <path d="M111 698V727H138" fill="none" stroke="#8d8d99" strokeWidth="1.200" />
                <path d="M113 728v6h7" fill="none" stroke="#a77f9c" strokeWidth="1.200" />
                <text x="113" y="697" fontSize="12.500" fill="#555" fontFamily="Roboto">y</text>
                <text x="142" y="727" fontSize="12.500" fill="#555" fontFamily="Roboto">x</text>
              </ViewSvg>
              <ViewTag>Top<TagArrow /></ViewTag>
              <GhostLabel>Rectangular...</GhostLabel>
            </Viewport>
            <ViewTabs>
              <ViewTab $w={70}>Perspective</ViewTab>
              <ViewTab $w={33} $on>Top</ViewTab>
              <Spacer $w={9} />
              <ViewTab $w={43}>Front</ViewTab>
              <ViewTab $w={47}>Right</ViewTab>
              <ViewTab $w={20} $plus>+</ViewTab>
            </ViewTabs>
          </Center>
          <RightDock>
            <DockBand>
              <DockSlot $h={22}><Gear size={14} /></DockSlot>
              <DockSlot $h={30}>
                {T(<><path d="M2 6c6-3 14-3 20 0l-2 6-8 4-8-4z" fill="#e05236" /><path d="M4 12l8 4 8-4-1 4-7 4-7-4z" fill="#eee" /><path d="M7 17l5 4 5-4-5 1z" fill="#3f62c9" /></>, 20)}
              </DockSlot>
              <DockSlot $h={41}>
                <svg width="18" height="18" viewBox="0 0 24 24"><circle cx="12" cy="12" r="8" fill="none" stroke="#e02a2a" strokeWidth="5" strokeDasharray="8.400 8.400" /><circle cx="12" cy="12" r="8" fill="none" stroke="#2fbf4a" strokeWidth="5" strokeDasharray="8.400 8.400" strokeDashoffset="8.400" /><circle cx="12" cy="12" r="8" fill="none" stroke="#4d5cf0" strokeWidth="5" strokeDasharray="4 21" strokeDashoffset="-4" /></svg>
              </DockSlot>
              <DockSlot $h={30}>
                {T(<><rect x="3" y="5" width="18" height="13" fill="#d7d7d7" stroke="#111" strokeWidth="1.500" /><path d="M8 20h8" stroke="#111" strokeWidth="2" /></>, 18)}
              </DockSlot>
              <DockSlot $h={40}>
                {T(<><rect x="2" y="4" width="20" height="16" fill="#5b72cf" stroke="#aab" /><text x="12" y="17" fontSize="13" textAnchor="middle" fill="#fff" fontStyle="italic" fontWeight="700" fontFamily="Roboto">?</text></>, 18)}
              </DockSlot>
              <DockSlot $h={30}>
                {T(<path d="M5 22V11a7 7 0 0 1 14 0v11z" fill="#f3cb16" stroke="#222" />, 16)}
              </DockSlot>
            </DockBand>
          </RightDock>
        </RhinoBody>
        <RhinoStatus>
          <PaneMark $ml={6} />
          <StatusCell $w={105} $inset={13}>CPlane</StatusCell>
          <StatusCell $w={172}>X -2.202&nbsp;&nbsp;Y 2.615&nbsp;&nbsp;Z 0</StatusCell>
          <StatusCell $w={76}>Millimeters</StatusCell>
          <StatusCell $w={268}><Swatch />Default</StatusCell>
          <StatusCell $w={61}>Grid Snap</StatusCell>
          <StatusCell $w={32}>Ortho</StatusCell>
          <PaneMark $ml={0} />
        </RhinoStatus>
      </RhinoWindow>

      <GhWindow>
        <TitleBar $pad={6}>
          <Logo />
          <TitleText>Grasshopper 2 Alpha - Book_1_Proposition_2*</TitleText>
          <Buttons />
        </TitleBar>
        <MenuBar $h={18} $bg="#f4f4f4">
          {ghMenu.map(([t, w]) => <MenuItem key={t} $w={w} $c="#555">{t}</MenuItem>)}
        </MenuBar>
        <GhTabs>
          {ghTabs.map(([t, w, on]) => <GhTab key={t} $w={w} $on={on}>{t}</GhTab>)}
        </GhTabs>
        <Ribbon>
          {ribbonGroups.map((g) => (
            <RibbonGroup key={g.name} $cols={g.cols}>
              <RibbonCells $cols={g.cols}>
                {g.icons.map((ic, i) => <RibbonCell key={i}>{ic}</RibbonCell>)}
              </RibbonCells>
              <RibbonLabel>{g.name}</RibbonLabel>
            </RibbonGroup>
          ))}
          <RibbonGrip>⋰⋰</RibbonGrip>
        </Ribbon>
        <Canvas>
          <GroupEdge />
          <WireSvg viewBox={`${OX} ${OY} 748 621`}>
            <g fill="none" stroke="#c9c9c9" strokeWidth="2.600" strokeLinecap="round">
              {wires.map((d, i) => <path key={i} d={d} />)}
            </g>
            <g fill="none" stroke="#d8d8d8" strokeWidth="1.800">
              {inPorts.map(([x, y], i) => <path key={i} d={`M${x} ${y - 4}a4 4 0 0 0 0 8`} />)}
              {outPorts.map(([x, y], i) => <path key={i} d={`M${x} ${y - 4}a4 4 0 0 1 0 8`} />)}
            </g>
          </WireSvg>

          <Tag $x={1125} $y={219}>Text Input</Tag>
          <Node $x={848} $y={228} $w={555} $h={55}>
            <NameCell $w={35}>txt</NameCell>
            <DotBand />
            <SheetPanel>
              <SheetRow><RowNo>0</RowNo>Book 1: Proposition 2</SheetRow>
              <SheetRow><RowNo>1</RowNo>To place a straight-line equal to a given straight-line at a given point (as an extremity).</SheetRow>
            </SheetPanel>
            <StripCell><span>▴</span><span>▾</span><span>⋮</span></StripCell>
          </Node>

          <Tag $x={893} $y={293}>Point XYZ</Tag>
          <Node $x={861} $y={303} $w={65} $h={54}>
            <PortColumn><span>x</span><span>y</span><span>z</span></PortColumn>
            <NodeFace>(xyz)<YellowDot /></NodeFace>
            <PortColumnRight><span>Pt</span></PortColumnRight>
          </Node>

          <Tag $x={989} $y={331}>Circle Radius</Tag>
          <Node $x={951} $y={341} $w={74} $h={36}>
            <PortColumn><span>Pl</span><span>R</span></PortColumn>
            <NodeFace>
              <svg width="20" height="20" viewBox="0 0 20 20"><circle cx="10" cy="10" r="8" fill="#5f6a6a" stroke="#f3e9c2" strokeWidth="1.800" /><rect x="6" y="6" width="8" height="8" fill="#56c3e8" /><path d="M10 6v8M6 10h8" stroke="#dff3fb" strokeWidth=".8" /></svg>
            </NodeFace>
            <PortColumnRight><span>Cr</span></PortColumnRight>
          </Node>

          <Tag $x={1166} $y={340}>Evaluate Curve</Tag>
          <Node $x={1129} $y={350} $w={75} $h={36}>
            <PortColumn><span>Cr</span><span>Lc</span></PortColumn>
            <NodeFace>
              <svg width="24" height="24" viewBox="0 0 24 24"><path d="M3 21c0-9 5-10 8-8s5 1 6-8" fill="none" stroke="#d2f3f7" strokeWidth="1.700" /><path d="M11 13l7 4M15 14.500l3 2.500-3 2" fill="none" stroke="#f3b6c6" strokeWidth="1.800" /><circle cx="11" cy="13" r="1.700" fill="#f3b6c6" /></svg>
            </NodeFace>
            <PortColumnRight><span>Pt</span><span>Tn</span></PortColumnRight>
          </Node>

          <Tag $x={1411} $y={342}>Evaluate Curve</Tag>
          <Node $x={1374} $y={352} $w={73} $h={36}>
            <PortColumn><span>Cr</span><span>Lc</span></PortColumn>
            <NodeFace>
              <svg width="24" height="24" viewBox="0 0 24 24"><path d="M3 21c0-9 5-10 8-8s5 1 6-8" fill="none" stroke="#d2f3f7" strokeWidth="1.700" /><path d="M11 13l7 4M15 14.500l3 2.500-3 2" fill="none" stroke="#f3b6c6" strokeWidth="1.800" /><circle cx="11" cy="13" r="1.700" fill="#f3b6c6" /></svg>
            </NodeFace>
            <PortColumnRight><span>Pt</span><span>Tn</span></PortColumnRight>
          </Node>

          <Tag $x={879} $y={357}>Slider</Tag>
          <Slider x={773} y={367} left={130} value="1.000" />

          <Tag $x={1035} $y={393}>Constant Picker</Tag>
          <Node $x={930} $y={403} $w={211} $h={37}>
            <NameCell $w={34}>con</NameCell>
            <DotBand />
            <PiPanel>π</PiPanel>
            <StripCell>⋮</StripCell>
          </Node>

          <Tag $x={981} $y={456}>Value</Tag>
          <Node $x={955} $y={466} $w={52} $h={17}>
            <ValueFace>0.5</ValueFace>
          </Node>

          <Tag $x={1082} $y={442}>Multiplication</Tag>
          <Node $x={1050} $y={453} $w={64} $h={36}>
            <PortColumn><span>A</span><span>B</span></PortColumn>
            <NodeFace><MulBox>×</MulBox></NodeFace>
            <PortColumnRight><span>Pr</span></PortColumnRight>
          </Node>

          <Tag $x={1084} $y={520}>Multiplication</Tag>
          <Node $x={1052} $y={531} $w={64} $h={36}>
            <PortColumn><span>A</span><span>B</span></PortColumn>
            <NodeFace><MulBox>×</MulBox></NodeFace>
            <PortColumnRight><span>Pr</span></PortColumnRight>
          </Node>

          <Tag $x={921} $y={538}>Slider</Tag>
          <Slider x={816} y={548} left={95} value="-0.250" />

          <Node $x={1465} $y={474} $w={60} $h={37}>
            <PortColumn><span>A</span><span>B</span></PortColumn>
            <NodeFace $fixed={18}>
              <svg width="20" height="20" viewBox="0 0 20 20"><path d="M3 17L17 3" stroke="#f3e9c2" strokeWidth="1.500" /><circle cx="3" cy="17" r="2" fill="#7ed6e0" /><circle cx="17" cy="3" r="2" fill="#7ed6e0" /></svg>
            </NodeFace>
          </Node>

          <Node $x={1443} $y={578} $w={100} $h={19}>
            <NameCell $w={34}>num</NameCell>
            <Track />
          </Node>

          <Tag $x={947} $y={652}>Slider</Tag>
          <Slider x={842} y={662} left={80} value="-0.368" />
          <Tag $x={948} $y={685}>Slider</Tag>
          <Slider x={843} y={695} left={38} value="-0.697" />

          <Tag $x={1168} $y={633}>Point XYZ</Tag>
          <Node $x={1136} $y={643} $w={65} $h={54}>
            <PortColumn><span>x</span><span>y</span><span>z</span></PortColumn>
            <NodeFace>(xyz)<YellowDot /></NodeFace>
            <PortColumnRight><span>Pt</span></PortColumnRight>
          </Node>
        </Canvas>
        <GhStatus>
          <Spacer $w={138}>Book_1_Proposition_2*</Spacer>
          <DarkChip>Sl</DarkChip>
          <Spacer $w={5} />
          <DarkChip><Tick /></DarkChip>
          <Spacer $w={10} />
          <PaleCount $w={222}>0</PaleCount>
          <Spacer $w={21}>
            <svg width="18" height="12" viewBox="0 0 18 12"><path d="M1 6c4-6.500 12-6.500 16 0-4 6.500-12 6.500-16 0z" fill="#111" /><circle cx="9" cy="6" r="3.200" fill="#e2e2e2" /><circle cx="9" cy="6" r="1.700" fill="#111" /></svg>
          </Spacer>
          <Spacer $w={22}>
            <svg width="16" height="16" viewBox="0 0 16 16"><circle cx="8" cy="8" r="7" fill="none" stroke="#444" /><path d="M1 8h14M8 1v14" stroke="#444" /></svg>
          </Spacer>
          <Spacer $w={40}>
            <svg width="16" height="16" viewBox="0 0 16 16"><defs><radialGradient id="ball" cx="35%" cy="30%"><stop offset="0" stopColor="#f4f4f4" /><stop offset="1" stopColor="#9c9c9c" /></radialGradient></defs><circle cx="8" cy="8" r="7" fill="url(#ball)" stroke="#666" /></svg>
          </Spacer>
          <OutlineChip>0</OutlineChip>
          <OutlineChip>
            <svg width="11" height="11" viewBox="0 0 11 11"><path d="M1 2h2l5 7h2" fill="none" stroke="#222" strokeWidth="1.700" /></svg>
          </OutlineChip>
          <OutlineChip>G</OutlineChip>
          <Spacer $w={21} />
          <Spacer $w={20}>
            <svg width="14" height="14" viewBox="0 0 14 14"><path d="M1 3l4 0 5 6M8 10h4V6" fill="none" stroke="#c8c8c8" strokeWidth="2" /></svg>
          </Spacer>
          <Spacer $w={21}>
            <svg width="14" height="14" viewBox="0 0 14 14"><path d="M1 2l11 10M1 12L12 2M8 2h4v4M8 12h4V8" fill="none" stroke="#cdcdcd" strokeWidth="1.500" /></svg>
          </Spacer>
          <Spacer $w={47}>
            <svg width="12" height="14" viewBox="0 0 12 14"><path d="M6 13V3M2 6l4-4 4 4" fill="none" stroke="#cdcdcd" strokeWidth="2" /></svg>
          </Spacer>
          <PaleCount $w={28}>0</PaleCount>
          <PaleCount $w={27}>0</PaleCount>
          <PaleCount $w={14}>0</PaleCount>
        </GhStatus>
      </GhWindow>
    </Screen>
  );
}
